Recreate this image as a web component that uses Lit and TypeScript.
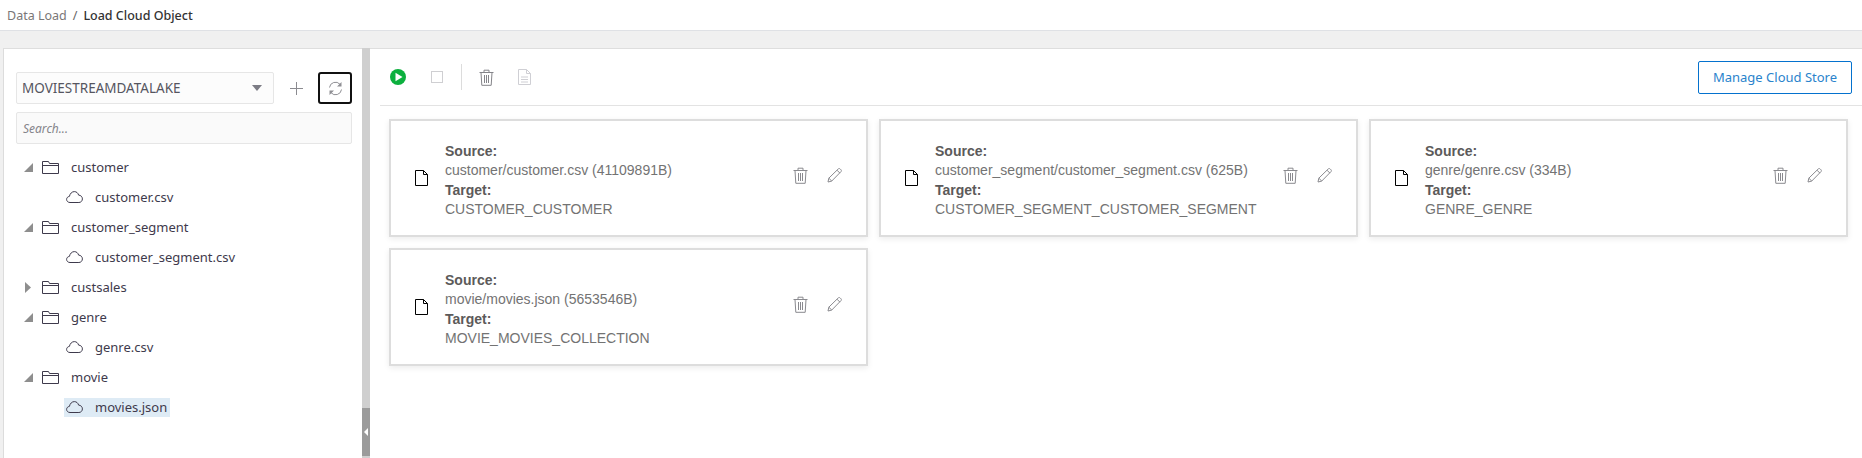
import { css, html, LitElement, svg } from "lit";
import { customElement } from "lit/decorators.js";

const folderIcon = html`<svg class="folder" width="17" height="13" viewBox="0 0 17 13">
  <path d="M.5 12.500V.5h6l1 2h9v10zM.5 4.500h16" fill="none" stroke="currentColor" />
</svg>`;

const cloudIcon = html`<svg class="cloud" width="17" height="12" viewBox="0 0 17 12">
  <path
    d="M4 11.500C2 11.500.6 10.100.6 8.400c0-1.600 1.200-2.800 2.800-3C4 2.500 6 .6 8.300.6c2.200 0 3.800 1.500 4.300 3.500 2.300.1 3.800 1.800 3.800 3.800 0 2-1.500 3.600-3.500 3.600z"
    fill="none"
    stroke="currentColor"
  />
</svg>`;

const trashIcon = html`<svg class="trash" width="15" height="17" viewBox="0 0 15 17">
  ${svg`<path
    d="M.5 3.500h14M5 3.500V1.200h5v2.300M2 3.500l.8 12.800h9.400L13 3.500M5.500 6v8M7.500 6v8M9.500 6v8"
    fill="none"
    stroke="currentColor"
  />`}
</svg>`;

const pencilIcon = html`<svg class="pencil" width="15" height="15" viewBox="0 0 15 15">
  <path
    d="M1 14l.8-3.800L11.300.9c.6-.5 1.300-.5 1.800 0l.9.9c.5.600.5 1.300 0 1.800L4.700 13.100zM1.800 10.200l3 2.900M10 2.200l2.900 2.900"
    fill="none"
    stroke="currentColor"
  />
</svg>`;

const fileIcon = html`<svg class="file" width="13" height="16" viewBox="0 0 13 16">
  <path d="M.5.500h8l4 4v11H.5zM8.500.5v4h4" fill="#fff" stroke="currentColor" />
</svg>`;

const treeRows = [
  { kind: "open", label: "customer" },
  { kind: "file", label: "customer.csv" },
  { kind: "open", label: "customer_segment" },
  { kind: "file", label: "customer_segment.csv" },
  { kind: "closed", label: "custsales" },
  { kind: "open", label: "genre" },
  { kind: "file", label: "genre.csv" },
  { kind: "open", label: "movie" },
  { kind: "file", label: "movies.json", selected: true },
];

const cards = [
  {
    source: "customer/customer.csv (41109891B)",
    target: "CUSTOMER_CUSTOMER",
  },
  {
    source: "customer_segment/customer_segment.csv (625B)",
    target: "CUSTOMER_SEGMENT_CUSTOMER_SEGMENT",
  },
  { source: "genre/genre.csv (334B)", target: "GENRE_GENRE" },
  {
    source: "movie/movies.json (5653546B)",
    target: "MOVIE_MOVIES_COLLECTION",
  },
];

@customElement("app-root")
export class AppRoot extends LitElement {
  static styles = css`
    :host {
      display: flex;
      flex-direction: column;
      height: 458px;
      overflow: hidden;
      background: #fff;
      font-family: "Noto Sans", "Open Sans", sans-serif;
      font-size: 13px;
      color: #3e3a4c;
    }

    .crumbs {
      display: flex;
      align-items: center;
      gap: 6px;
      height: 30px;
      padding-left: 7px;
      font-size: 12.500px;
      border-bottom: 1px solid #dfe1e5;
    }

    .crumbs .link {
      color: #7a7777;
    }

    .crumbs .sep {
      color: #666;
    }

    .crumbs .current {
      color: #333;
      font-weight: 500;
    }

    .band {
      height: 17px;
      background: #f0f0f0;
    }

    .main {
      flex: 1;
      min-height: 0;
      display: flex;
      padding-left: 3px;
      background: #f0f0f0;
    }

    .tree-panel {
      width: 359px;
      box-sizing: border-box;
      border-left: 1px solid #dcdcdc;
      border-top: 1px solid #dedede;
      background: #fff;
      padding: 23px 10px 0 12px;
    }

    .picker {
      display: flex;
      align-items: stretch;
      height: 32px;
    }

    .select {
      flex: 0 0 258px;
      box-sizing: border-box;
      display: flex;
      align-items: center;
      justify-content: space-between;
      padding: 0 11px 0 5px;
      background: #fcfcfc;
      border: 1px solid #e6e6e6;
      border-radius: 2px;
      font-size: 13.500px;
      color: #55555f;
    }

    .caret {
      width: 0;
      height: 0;
      border-left: 5px solid transparent;
      border-right: 5px solid transparent;
      border-top: 6px solid #7c7c85;
    }

    .add {
      flex: 1;
      display: flex;
      align-items: center;
      justify-content: center;
      color: #8b8b90;
    }

    .refresh {
      flex: 0 0 34px;
      box-sizing: border-box;
      display: flex;
      align-items: center;
      justify-content: center;
      border: 2px solid #111;
      border-radius: 3px;
      color: #8f8f94;
    }

    .search {
      box-sizing: border-box;
      height: 32px;
      margin-top: 8px;
      padding: 0 6px;
      display: flex;
      align-items: center;
      background: #fafafa;
      border: 1px solid #e6e6e6;
      border-radius: 2px;
      font-size: 12px;
      font-style: italic;
      color: #85848a;
    }

    .tree {
      margin-top: 8px;
    }

    .row {
      display: flex;
      align-items: center;
      height: 30px;
      padding-left: 7px;
    }

    .twisty {
      flex: 0 0 10px;
      margin-right: 9px;
      display: flex;
      justify-content: center;
      color: #8e8e8e;
    }

    .folder {
      flex: none;
      margin-right: 12px;
    }

    .leaf {
      display: flex;
      align-items: center;
      height: 19px;
      margin-left: 41px;
      padding: 0 3px 0 2px;
    }

    .leaf.selected {
      background: #deebf5;
    }

    .cloud {
      flex: none;
      margin-right: 12px;
    }

    .splitter {
      flex: 0 0 8px;
      display: flex;
      flex-direction: column;
      justify-content: flex-end;
      padding-bottom: 2px;
      background: #cfcfcf;
    }

    .handle {
      height: 48px;
      display: flex;
      align-items: center;
      justify-content: center;
      background: #9b9b9b;
    }

    .handle i {
      width: 0;
      height: 0;
      border-top: 4px solid transparent;
      border-bottom: 4px solid transparent;
      border-right: 4px solid #fff;
    }

    .content {
      flex: 1;
      min-width: 0;
      background: #fff;
      border-top: 1px solid #dedede;
      padding-left: 10px;
    }

    .toolbar {
      display: flex;
      align-items: center;
      height: 56px;
      padding-right: 10px;
      border-bottom: 1px solid #e3e3e3;
    }

    .tool {
      display: flex;
      align-items: center;
      justify-content: center;
    }

    .tool-play {
      margin-left: 10px;
    }

    .tool-stop {
      margin-left: 25px;
      width: 12px;
      height: 12px;
      box-sizing: border-box;
      border: 1px solid #cfcfd2;
    }

    .divider {
      width: 1px;
      height: 26px;
      margin: 0 17px 0 18px;
      background: #dcdcdc;
    }

    .tool-trash {
      color: #85858a;
    }

    .tool-doc {
      margin-left: 24px;
      color: #cfcfd4;
    }

    .manage {
      margin-left: auto;
      box-sizing: border-box;
      width: 154px;
      height: 33px;
      display: flex;
      align-items: center;
      justify-content: center;
      border: 1px solid #0572ce;
      border-radius: 2px;
      color: #2a83cc;
      font-size: 13px;
    }

    .cards {
      display: grid;
      grid-template-columns: repeat(3, 479px);
      grid-auto-rows: 118px;
      gap: 11px 11px;
      padding: 13px 0 0 9px;
    }

    .card {
      box-sizing: border-box;
      display: flex;
      align-items: center;
      padding: 0 24px 0 24px;
      border: 2px solid #dddddd;
      background: #fff;
      box-shadow: 0 2px 6px rgba(0, 0, 0, 0.08);
      font-family: "Liberation Sans", Arial, sans-serif;
      font-size: 14px;
      line-height: 19.400px;
      color: #737373;
    }

    .file {
      flex: none;
      color: #000;
      margin-right: 17px;
    }

    .text {
      flex: 1;
      min-width: 0;
      padding-top: 5px;
      white-space: nowrap;
    }

    .text b {
      display: block;
      color: #5c5a5a;
    }

    .text span {
      display: block;
    }

    .actions {
      display: flex;
      align-items: center;
      gap: 19px;
      color: #8a8a8f;
      margin-bottom: 5px;
    }
  `;

  renderTreeRow(row: (typeof treeRows)[number]) {
    if (row.kind === "file") {
      return html`<div class="row">
        <div class="leaf ${row.selected ? "selected" : ""}">
          ${cloudIcon}<span>${row.label}</span>
        </div>
      </div>`;
    }
    const twisty =
      row.kind === "open"
        ? html`<svg width="9" height="9" viewBox="0 0 9 9"><path d="M9 0v9H0z" fill="currentColor" /></svg>`
        : html`<svg width="6" height="11" viewBox="0 0 6 11"><path d="M0 0l6 5.500L0 11z" fill="currentColor" /></svg>`;
    return html`<div class="row">
      <span class="twisty">${twisty}</span>${folderIcon}<span>${row.label}</span>
    </div>`;
  }

  renderCard(card: (typeof cards)[number]) {
    return html`<div class="card">
      ${fileIcon}
      <div class="text">
        <b>Source:</b>
        <span>${card.source}</span>
        <b>Target:</b>
        <span>${card.target}</span>
      </div>
      <div class="actions">${trashIcon}${pencilIcon}</div>
    </div>`;
  }

  render() {
    return html`
      <div class="crumbs">
        <span class="link">Data Load</span>
        <span class="sep">/</span>
        <span class="current">Load Cloud Object</span>
      </div>
      <div class="band"></div>
      <div class="main">
        <div class="tree-panel">
          <div class="picker">
            <div class="select">
              <span>MOVIESTREAMDATALAKE</span>
              <i class="caret"></i>
            </div>
            <div class="add">
              <svg width="13" height="13" viewBox="0 0 13 13">
                <path d="M6.500 0v13M0 6.500h13" stroke="currentColor" fill="none" />
              </svg>
            </div>
            <div class="refresh">
              <svg width="15" height="15" viewBox="0 0 15 15">
                <path d="M1.500 6.500A6 6 0 0 1 12 3.300M13.500 8.500A6 6 0 0 1 3 11.700" fill="none" stroke="currentColor" />
                <path d="M13.500 1v4.500H9zM1.500 14V9.500H6z" fill="currentColor" />
              </svg>
            </div>
          </div>
          <div class="search">Search...</div>
          <div class="tree">${treeRows.map((r) => this.renderTreeRow(r))}</div>
        </div>
        <div class="splitter">
          <div class="handle"><i></i></div>
        </div>
        <div class="content">
          <div class="toolbar">
            <span class="tool tool-play">
              <svg width="16" height="16" viewBox="0 0 16 16">
                <circle cx="8" cy="8" r="8" fill="#0cb03e" />
                <path d="M5.500 3.800v8.400L12.500 8z" fill="#fff" />
              </svg>
            </span>
            <span class="tool tool-stop"></span>
            <span class="divider"></span>
            <span class="tool tool-trash">${trashIcon}</span>
            <span class="tool tool-doc">
              <svg width="13" height="16" viewBox="0 0 13 16">
                <path d="M.5.500h8l4 4v11H.5zM8.500.5v4h4M3 8h7M3 10.500h7M3 13h7" fill="none" stroke="currentColor" />
              </svg>
            </span>
            <span class="manage">Manage Cloud Store</span>
          </div>
          <div class="cards">${cards.map((c) => this.renderCard(c))}</div>
        </div>
      </div>
    `;
  }
}
